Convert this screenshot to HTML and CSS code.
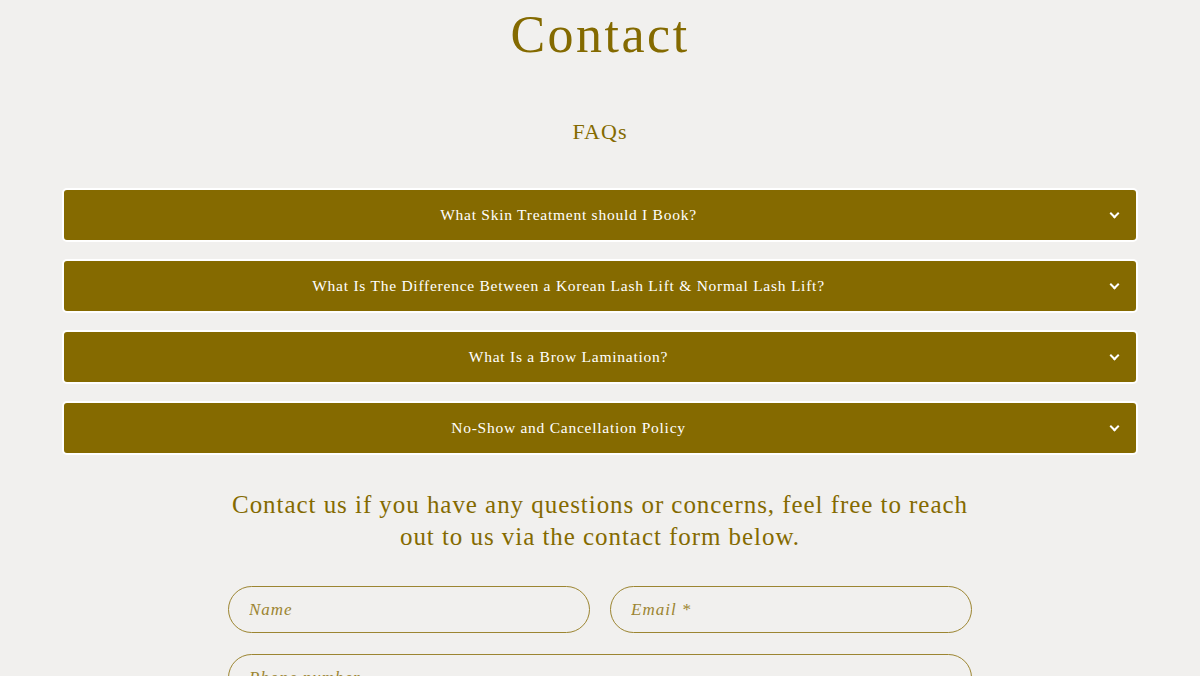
FILE: index.html
```html
<!DOCTYPE html>
<html lang="en">
<head>
    <meta charset="UTF-8">
    <meta name="viewport" content="width=device-width, initial-scale=1.0">
    <title>Contact</title>
    <link rel="stylesheet" href="styles.css">
</head>
<body>
    <main class="page">
        <h1 class="page-title">Contact</h1>

        <section class="faq">
            <h2 class="faq-title">FAQs</h2>

            <details class="faq-item">
                <summary><span class="faq-question">What Skin Treatment should I Book?</span><span class="chevron"></span></summary>
            </details>
            <details class="faq-item">
                <summary><span class="faq-question">What Is The Difference Between a Korean Lash Lift &amp; Normal Lash Lift?</span><span class="chevron"></span></summary>
            </details>
            <details class="faq-item">
                <summary><span class="faq-question">What Is a Brow Lamination?</span><span class="chevron"></span></summary>
            </details>
            <details class="faq-item">
                <summary><span class="faq-question">No-Show and Cancellation Policy</span><span class="chevron"></span></summary>
            </details>
        </section>

        <p class="intro">Contact us if you have any questions or concerns, feel free to reach out to us via the contact form below.</p>

        <form class="contact-form">
            <input type="text" placeholder="Name">
            <input type="email" placeholder="Email *">
            <input type="tel" class="wide" placeholder="Phone number">
        </form>
    </main>
</body>
</html>
```

FILE: styles.css
```css
body {
    background-color: #f1f0ee;
    color: #846a00;
    font-family: "Liberation Serif", serif;
    margin: 0;
}

.page {
    width: 1076px;
    margin: 0 auto;
}

.page-title {
    font-size: 52px;
    font-weight: normal;
    text-align: center;
    letter-spacing: 2.5px;
    margin: 4px 0 0;
    line-height: 62px;
}

.faq-title {
    font-size: 22px;
    font-weight: normal;
    text-align: center;
    letter-spacing: 1px;
    margin: 51px 0 41px;
    line-height: 30px;
}

.faq-item {
    background-color: #856a00;
    border: 2px solid #ffffff;
    border-radius: 5px;
    margin-bottom: 17px;
}

.faq-item summary {
    list-style: none;
    display: flex;
    align-items: center;
    height: 50px;
    padding: 0 16px 0 20px;
    color: #ffffff;
    cursor: pointer;
}

.faq-item summary::-webkit-details-marker {
    display: none;
}

.faq-question {
    flex: 1;
    text-align: center;
    font-size: 15.5px;
    letter-spacing: 0.75px;
    margin-right: 58px;
}

/* small down chevron */
.chevron {
    width: 5px;
    height: 5px;
    border-right: 2px solid #ffffff;
    border-bottom: 2px solid #ffffff;
    transform: rotate(45deg);
    margin: 0 2px 3px 0;
}

.intro {
    width: 744px;
    margin: 34px auto 0;
    font-size: 25px;
    line-height: 32px;
    text-align: center;
    letter-spacing: 0.95px;
}

.contact-form {
    width: 744px;
    margin: 33px auto 0;
    display: grid;
    grid-template-columns: 1fr 1fr;
    gap: 21px 20px;
}

.contact-form input {
    height: 47px;
    box-sizing: border-box;
    border: 1px solid #9c8531;
    border-radius: 24px;
    background: transparent;
    padding: 0 20px;
    font-family: "Liberation Serif", serif;
    font-size: 17px;
    font-style: italic;
    letter-spacing: 1px;
    color: #846a00;
}

.contact-form input::placeholder {
    color: #9c8531;
}

.contact-form .wide {
    grid-column: 1 / 3;
}
```
